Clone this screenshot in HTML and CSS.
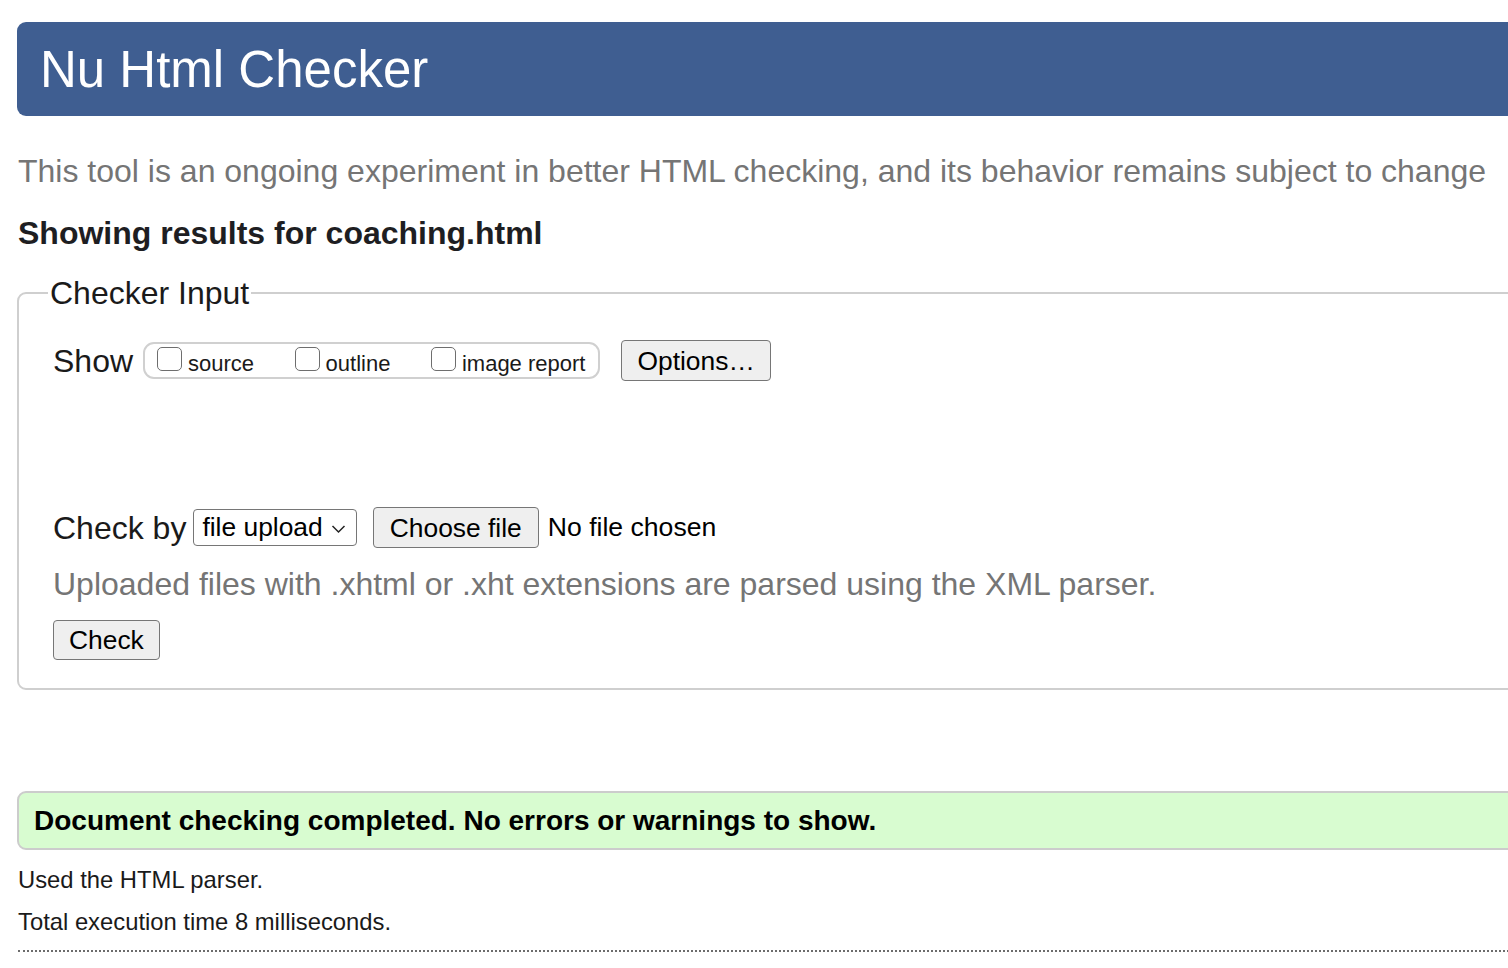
FILE: index.html
```html
<!DOCTYPE html>
<html lang="en">
<head>
<meta charset="utf-8">
<title>Nu Html Checker</title>
<link rel="stylesheet" href="styles.css">
</head>
<body>
<div class="page">
  <header class="banner"><h1 class="title">Nu Html Checker</h1></header>
  <p class="intro">This tool is an ongoing experiment in better HTML checking, and its behavior remains subject to change</p>
  <h2 class="results-for">Showing results for coaching.html</h2>
  <fieldset class="input-box">
    <legend class="input-legend">Checker Input</legend>
    <div class="row show-row">
      <span class="row-label">Show</span>
      <div class="show-group">
        <label class="opt"><input type="checkbox" class="cb"><span>source</span></label>
        <label class="opt"><input type="checkbox" class="cb"><span>outline</span></label>
        <label class="opt"><input type="checkbox" class="cb"><span>image report</span></label>
      </div>
      <button class="btn btn-options" type="button">Options…</button>
    </div>
    <div class="row checkby-row">
      <span class="row-label">Check by</span>
      <div class="select">
        <span>file upload</span>
        <svg class="chev" width="15" height="10" viewBox="0 0 15 10"><path d="M1.5 2 L7.5 8 L13.5 2" fill="none" stroke="#222" stroke-width="1.5"/></svg>
      </div>
      <button class="btn btn-file" type="button">Choose file</button>
      <span class="no-file">No file chosen</span>
    </div>
    <p class="hint">Uploaded files with .xhtml or .xht extensions are parsed using the XML parser.</p>
    <button class="btn btn-check" type="button">Check</button>
  </fieldset>
  <div class="success">Document checking completed. No errors or warnings to show.</div>
  <p class="meta">Used the HTML parser.</p>
  <p class="meta meta-last">Total execution time 8 milliseconds.</p>
</div>
</body>
</html>
```
FILE: styles.css
```css
html { overflow: hidden; background: #fff; }
body {
  margin: 0;
  padding: 22px 0 0 17px;
  font-family: "Liberation Sans", Arial, sans-serif;
  color: #1a1a1a;
}
.page { width: 1560px; }

.banner {
  height: 94px;
  background: #3f5e91;
  border-radius: 9px 0 0 9px;
  display: flex;
  align-items: center;
  padding-left: 23px;
}
.title {
  margin: 0;
  font-size: 51px;
  font-weight: normal;
  color: #fff;
  line-height: 1;
}

.intro {
  margin: 36px 0 0 1px;
  font-size: 32px;
  line-height: 38px;
  color: #757575;
}
.results-for {
  margin: 26px 0 0 1px;
  font-size: 32px;
  line-height: 35px;
  font-weight: bold;
  color: #1e1e22;
}

.input-box {
  margin: 23px 0 0 0;
  border: 2px solid #cfcfcf;
  border-radius: 9px;
  padding: 0 0 28px 34px;
}
.input-legend {
  margin-left: -5px;
  padding: 0 2px;
  font-size: 32px;
  line-height: 38px;
  color: #1a1a1a;
}

.row { display: flex; align-items: center; }
.row-label { font-size: 32px; line-height: 38px; }

.show-row { margin-top: 28px; height: 41px; }
.show-group {
  margin-left: 10px;
  height: 33px;
  border: 2px solid #d0d0d0;
  border-radius: 11px;
  display: flex;
  align-items: center;
  padding: 0 13px 0 12px;
  gap: 40.5px;
}
.opt {
  display: flex;
  align-items: center;
  font-size: 22px;
  line-height: 26px;
  color: #1a1a1a;
}
.opt span { margin-top: 6px; margin-left: 6px; }
.cb {
  appearance: none;
  -webkit-appearance: none;
  margin: -4px 0 0 0;
  width: 25px;
  height: 24px;
  border: 1.5px solid #6e6e6e;
  border-radius: 5px;
  background: #fff;
}

.btn {
  font-family: "Liberation Sans", Arial, sans-serif;
  font-size: 26.4px;
  line-height: 30px;
  color: #000;
  background: #efefef;
  border: 1.5px solid #767676;
  border-radius: 4px;
  padding: 0 14px;
}
.btn-options { margin-left: 21px; height: 41px; padding: 0 15px; }

.checkby-row { margin-top: 126px; height: 41px; }
.select {
  margin-left: 7px;
  height: 37px;
  box-sizing: border-box;
  border: 1.5px solid #767676;
  border-radius: 4px;
  background: #fff;
  display: flex;
  align-items: center;
  padding: 0 10px 0 8px;
  font-size: 26.4px;
  color: #000;
}
.chev { margin-left: 8px; margin-top: 2px; }
.btn-file { margin-left: 16px; height: 41px; padding: 0 16px; }
.no-file { margin-left: 9px; font-size: 26.6px; color: #000; }

.hint {
  margin: 17px 0 0 0;
  font-size: 32px;
  line-height: 38px;
  color: #757575;
}
.btn-check { margin-top: 17px; height: 40px; padding: 0 15px; }

.success {
  margin-top: 101px;
  height: 59px;
  box-sizing: border-box;
  border: 2px solid #cccccc;
  border-radius: 9px;
  background: #d8fcd0;
  padding-left: 15px;
  display: flex;
  align-items: center;
  font-size: 28px;
  font-weight: bold;
  color: #000;
}

.meta {
  margin: 16px 0 0 1px;
  font-size: 23.8px;
  line-height: 28px;
  color: #1a1a1a;
}
.meta + .meta { margin-top: 14px; }
.meta-last {
  padding-bottom: 14px;
  border-bottom: 2px dotted #6c6c6c;
}
```
